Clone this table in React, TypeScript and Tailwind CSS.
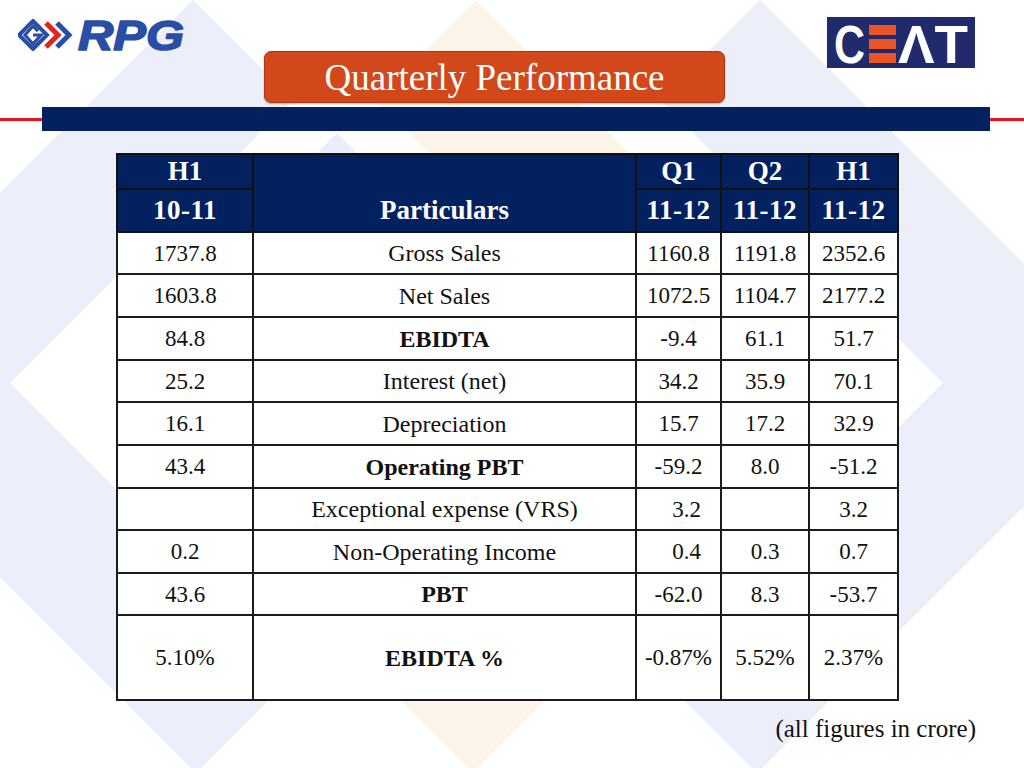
import React from "react";

const rows: { c: string[]; bold?: boolean; h: string; q1pad?: boolean }[] = [
  { c: ["1737.8", "Gross Sales", "1160.8", "1191.8", "2352.6"], h: "h-[42px]" },
  { c: ["1603.8", "Net Sales", "1072.5", "1104.7", "2177.2"], h: "h-[43px]" },
  { c: ["84.8", "EBIDTA", "-9.4", "61.1", "51.7"], bold: true, h: "h-[43px]" },
  { c: ["25.2", "Interest (net)", "34.2", "35.9", "70.1"], h: "h-[42px]" },
  { c: ["16.1", "Depreciation", "15.7", "17.2", "32.9"], h: "h-[43px]" },
  { c: ["43.4", "Operating PBT", "-59.2", "8.0", "-51.2"], bold: true, h: "h-[43px]" },
  { c: ["", "Exceptional expense (VRS)", "3.2", "", "3.2"], h: "h-[42px]", q1pad: true },
  { c: ["0.2", "Non-Operating Income", "0.4", "0.3", "0.7"], h: "h-[43px]", q1pad: true },
  { c: ["43.6", "PBT", "-62.0", "8.3", "-53.7"], bold: true, h: "h-[42px]" },
  { c: ["5.10%", "EBIDTA %", "-0.87%", "5.52%", "2.37%"], bold: true, h: "h-[85px]" },
];

function Background() {
  return (
    <svg className="absolute inset-0 w-full h-full" viewBox="0 0 1024 768" preserveAspectRatio="none">
      <polygon points="193,0 293,100 10,383 298,671 196,773 -192,385" fill="#eceef9" />
      <polygon points="760,0 660,100 943,383 655,671 757,773 1145,385" fill="#eceef9" />
      <polygon points="476,0 376,100 659,383 371,671 473,773 861,385" fill="#fdf5ea" />
      <polygon points="337,133 420,216 254,216" fill="#eceef9" />
    </svg>
  );
}

function RpgLogo() {
  return (
    <div className="flex items-center">
      <svg width="58" height="32" viewBox="0 0 58 32">
        <path d="M15 2 L29 16 L15 30 L1 16 Z" fill="none" stroke="#2a4ea6" strokeWidth="4" />
        <path d="M20 12 L15 7 L7 16 L15 25 L23 16 L15 16" fill="none" stroke="#2a4ea6" strokeWidth="3.2" />
        <polyline points="28,4 40,16 28,28" fill="none" stroke="#e3231c" strokeWidth="5" />
        <polyline points="39,4 51,16 39,28" fill="none" stroke="#2a4ea6" strokeWidth="5" />
      </svg>
      <svg width="116" height="40" viewBox="0 0 116 40" className="overflow-visible">
        <text
          x="2"
          y="35"
          fontFamily="Liberation Sans, Arial, sans-serif"
          fontWeight="bold"
          fontStyle="italic"
          fontSize="43"
          textLength="106"
          lengthAdjust="spacingAndGlyphs"
          fill="#2a4ea6"
          stroke="#2a4ea6"
          strokeWidth="1.6"
          strokeLinejoin="round"
        >
          RPG
        </text>
      </svg>
    </div>
  );
}

function CeatLogo() {
  return (
    <svg width="148" height="51" viewBox="0 0 148 51" className="overflow-visible">
      <rect x="0" y="0" width="148" height="51" fill="#202a6c" />
      <text
        x="7"
        y="46"
        fontFamily="Liberation Sans, Arial, sans-serif"
        fontWeight="bold"
        fontSize="53"
        textLength="31"
        lengthAdjust="spacingAndGlyphs"
        fill="#ffffff"
      >
        C
      </text>
      <rect x="42" y="8" width="27" height="10" fill="#ea5426" />
      <rect x="42" y="22" width="27" height="10" fill="#ea5426" />
      <rect x="42" y="36" width="27" height="10" fill="#ea5426" />
      <text
        x="71"
        y="46"
        fontFamily="Liberation Sans, Arial, sans-serif"
        fontWeight="bold"
        fontSize="53"
        textLength="70"
        lengthAdjust="spacingAndGlyphs"
        fill="#ffffff"
      >
        ΛT
      </text>
    </svg>
  );
}

export default function App() {
  const serif = "font-['Liberation_Serif']";
  const hd = `border-2 border-[#111] bg-[#03215f] text-white font-bold text-[27px] text-center leading-none ${serif}`;
  const td = `border-2 border-[#1a1a1a] text-center text-[23px] text-[#111] leading-none ${serif}`;
  return (
    <div className={`relative w-[1024px] h-[768px] overflow-hidden bg-white ${serif}`}>
      <Background />
      <div className="relative flex flex-col">
        <div className="flex items-start h-[103px]">
          <div className="ml-[18px] mt-[15px]">
            <RpgLogo />
          </div>
          <div className={`ml-[72px] mt-[51px] w-[461px] h-[52px] rounded-[7px] bg-[#d3481a] border border-[#a9380f] flex items-center justify-center text-white text-[37px] leading-none shadow-[0_1px_2px_rgba(0,0,0,0.25)] ${serif}`}>
            Quarterly Performance
          </div>
          <div className="ml-[102px] mt-[17px]">
            <CeatLogo />
          </div>
        </div>
        <div className="flex items-center mt-[4px] h-[24px]">
          <div className="w-[42px] h-[3px] bg-[#e6141b]" />
          <div className="w-[948px] h-[24px] bg-[#03215f]" />
          <div className="flex-1 h-[3px] bg-[#e6141b]" />
        </div>
        <div className="ml-[116px] mt-[22px]">
          <table className={`w-[781px] table-fixed border-collapse border-2 border-[#111] ${serif}`}>
            <colgroup>
              <col className="w-[136px]" />
              <col className="w-[383px]" />
              <col className="w-[85px]" />
              <col className="w-[88px]" />
              <col className="w-[89px]" />
            </colgroup>
            <thead>
              <tr className="h-[35px]">
                <th className={hd}>H1</th>
                <th rowSpan={2} className={`${hd} align-bottom pb-[7px]`}>
                  Particulars
                </th>
                <th className={hd}>Q1</th>
                <th className={hd}>Q2</th>
                <th className={hd}>H1</th>
              </tr>
              <tr className="h-[43px]">
                <th className={`${hd} tracking-[0.5px]`}>10-11</th>
                <th className={`${hd} tracking-[0.5px]`}>11-12</th>
                <th className={`${hd} tracking-[0.5px]`}>11-12</th>
                <th className={`${hd} tracking-[0.5px]`}>11-12</th>
              </tr>
            </thead>
            <tbody className="bg-white">
              {rows.map((r, i) => (
                <tr key={i} className={r.h}>
                  <td className={td}>{r.c[0]}</td>
                  <td className={`${td} text-[24px] ${r.bold ? "font-bold" : ""}`}>{r.c[1]}</td>
                  <td className={`${td} ${r.q1pad ? "pl-[16px]" : ""}`}>{r.c[2]}</td>
                  <td className={td}>{r.c[3]}</td>
                  <td className={td}>{r.c[4]}</td>
                </tr>
              ))}
            </tbody>
          </table>
        </div>
        <div className={`mt-[15px] pr-[48px] text-right text-[25px] leading-none text-[#111] ${serif}`}>
          (all figures in crore)
        </div>
      </div>
    </div>
  );
}
